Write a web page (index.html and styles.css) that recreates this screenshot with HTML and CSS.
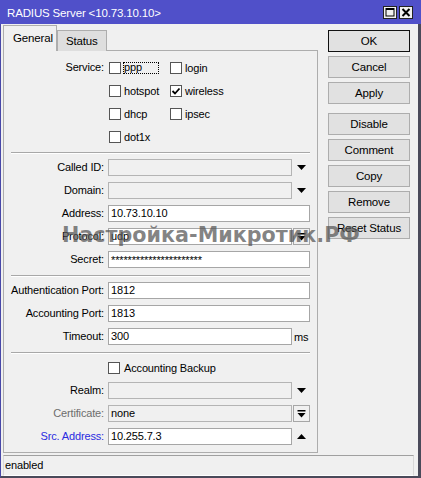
FILE: index.html
```html
<!DOCTYPE html>
<html>
<head>
<meta charset="utf-8">
<link rel="stylesheet" href="styles.css">
</head>
<body>
<div class="window">
  <div class="titlebar">
    <span class="title">RADIUS Server &lt;10.73.10.10&gt;</span>
    <span class="tbtn"><svg width="12" height="11" viewBox="0 0 12 11"><rect x="2" y="1.5" width="8" height="7.5" fill="none" stroke="#000" stroke-width="1"/><rect x="2" y="1" width="8" height="2" fill="#000"/></svg></span>
    <span class="tbtn"><svg width="12" height="11" viewBox="0 0 12 11"><path d="M2.5 2 L9.5 9 M9.5 2 L2.5 9" stroke="#000" stroke-width="2"/></svg></span>
  </div>
  <div class="frame">
    <div class="content">
      <div class="main">
        <div class="tabs">
          <div class="tab active">General</div>
          <div class="tab">Status</div>
        </div>
        <div class="panel">
          <div class="svc">
            <div class="lbl">Service:</div>
            <div class="cbgrid">
              <div class="cb"><span class="box"></span><span class="focus">ppp</span></div>
              <div class="cb"><span class="box"></span><span>login</span></div>
              <div class="cb"><span class="box"></span><span>hotspot</span></div>
              <div class="cb"><span class="box"><svg width="10" height="10" viewBox="0 0 10 10"><path d="M1.5 5 L4 7.5 L8.5 2.5" fill="none" stroke="#000" stroke-width="1.8"/></svg></span><span>wireless</span></div>
              <div class="cb"><span class="box"></span><span>dhcp</span></div>
              <div class="cb"><span class="box"></span><span>ipsec</span></div>
              <div class="cb"><span class="box"></span><span>dot1x</span></div>
            </div>
          </div>
          <div class="sep"></div>
          <div class="row"><div class="lbl">Called ID:</div><div class="field w184 dis"></div><div class="arrow"><svg width="9" height="5" viewBox="0 0 9 5"><path d="M0 0 H9 L4.5 5 Z" fill="#000"/></svg></div></div>
          <div class="row"><div class="lbl">Domain:</div><div class="field w184 dis"></div><div class="arrow"><svg width="9" height="5" viewBox="0 0 9 5"><path d="M0 0 H9 L4.5 5 Z" fill="#000"/></svg></div></div>
          <div class="row"><div class="lbl">Address:</div><div class="field w202">10.73.10.10</div></div>
          <div class="row"><div class="lbl">Protocol:</div><div class="field w184">udp</div><div class="cbtn"><svg width="9" height="8" viewBox="0 0 9 8"><rect x="0.5" y="0" width="8" height="1.5" fill="#000"/><path d="M0.5 3 H8.5 L4.5 7.5 Z" fill="#000"/></svg></div></div>
          <div class="row"><div class="lbl">Secret:</div><div class="field w202 secret">**********************</div></div>
          <div class="sep"></div>
          <div class="row"><div class="lbl">Authentication Port:</div><div class="field w202">1812</div></div>
          <div class="row"><div class="lbl">Accounting Port:</div><div class="field w202">1813</div></div>
          <div class="row"><div class="lbl">Timeout:</div><div class="field w184">300</div><div class="unit">ms</div></div>
          <div class="sep"></div>
          <div class="row"><div class="lbl"></div><div class="cb solo"><span class="box"></span><span>Accounting Backup</span></div></div>
          <div class="row"><div class="lbl">Realm:</div><div class="field w184 dis"></div><div class="arrow"><svg width="9" height="5" viewBox="0 0 9 5"><path d="M0 0 H9 L4.5 5 Z" fill="#000"/></svg></div></div>
          <div class="row"><div class="lbl gray">Certificate:</div><div class="field w184 dis">none</div><div class="cbtn"><svg width="9" height="8" viewBox="0 0 9 8"><rect x="0.5" y="0" width="8" height="1.5" fill="#000"/><path d="M0.5 3 H8.5 L4.5 7.5 Z" fill="#000"/></svg></div></div>
          <div class="row"><div class="lbl blue">Src. Address:</div><div class="field w184">10.255.7.3</div><div class="arrow"><svg width="9" height="5" viewBox="0 0 9 5"><path d="M0 5 H9 L4.5 0 Z" fill="#000"/></svg></div></div>
        </div>
      </div>
      <div class="side">
        <div class="btn default">OK</div>
        <div class="btn">Cancel</div>
        <div class="btn">Apply</div>
        <div class="btn gapped">Disable</div>
        <div class="btn">Comment</div>
        <div class="btn">Copy</div>
        <div class="btn">Remove</div>
        <div class="btn">Reset Status</div>
      </div>
    </div>
    <div class="statusbar">enabled</div>
  </div>
  <div class="watermark">Настройка-Микротик.РФ</div>
</div>
</body>
</html>
```

FILE: styles.css
```css
html, body {
  margin: 0;
  padding: 0;
  background: #f0f0f0;
}
.window {
  position: relative;
  width: 421px;
  height: 478px;
  display: flex;
  flex-direction: column;
  font-family: "Liberation Sans", Arial, sans-serif;
  font-size: 11px;
  letter-spacing: -0.15px;
  color: #000;
  background: #f0f0f0;
  overflow: hidden;
}
.titlebar {
  height: 24px;
  flex-shrink: 0;
  background: #5050c9;
  display: flex;
  align-items: center;
  padding: 0 8px 0 7px;
  box-sizing: border-box;
}
.title {
  color: #fff;
  font-size: 11.5px;
  flex: 1;
  padding-top: 1px;
}
.tbtn {
  width: 14px;
  height: 13px;
  box-sizing: border-box;
  border: 1px solid #222;
  background: #f0f0f0;
  margin-left: 2px;
  display: flex;
  align-items: center;
  justify-content: center;
}
.frame {
  flex: 1;
  display: flex;
  flex-direction: column;
  border-left: 1px solid #4848a8;
  border-right: 3px solid #4a4a5a;
  border-bottom: 2px solid #4a4a5a;
}
.content {
  display: flex;
  padding-top: 1px;
}
.main {
  margin-left: 2px;
  width: 315px;
  display: flex;
  flex-direction: column;
}
.tabs {
  display: flex;
  align-items: flex-end;
  height: 26px;
  position: relative;
  z-index: 1;
}
.tab {
  box-sizing: border-box;
  border: 1px solid #adadad;
  border-bottom: none;
  height: 21px;
  padding: 0 8px;
  line-height: 20px;
  background: #dedede;
  font-size: 11.5px;
}
.tab.active {
  height: 26px;
  width: 54px;
  line-height: 24px;
  background: #f0f0f0;
  padding: 0 0 0 9px;
}
.panel {
  margin-top: -1px;
  height: 403px;
  box-sizing: border-box;
  border: 1px solid #adadad;
  padding-top: 5px;
  background: #f0f0f0;
}
.svc {
  display: flex;
  align-items: flex-start;
}
.lbl {
  width: 100px;
  margin-right: 4px;
  height: 23px;
  line-height: 23px;
  text-align: right;
  white-space: nowrap;
  flex-shrink: 0;
}
.lbl.gray { color: #6d6d6d; }
.lbl.blue { color: #2b2be0; }
.cbgrid {
  display: grid;
  grid-template-columns: 61px auto;
  grid-auto-rows: 23px;
}
.cb {
  display: flex;
  align-items: center;
}
.box {
  width: 12px;
  height: 12px;
  box-sizing: border-box;
  border: 1px solid #555;
  background: #fff;
  margin-left: 1px;
  margin-right: 3px;
  display: flex;
  align-items: center;
  justify-content: center;
}
.cb.solo .box {
  margin-left: 0;
  margin-right: 4px;
}
.focus {
  display: inline-block;
  width: 36px;
  height: 12px;
  box-sizing: border-box;
  border: 1px dotted #000;
  line-height: 9px;
  padding-left: 0;
  margin-left: -1px;
}
.sep {
  height: 0;
  border-top: 1px solid #a8a8a8;
  border-bottom: 1px solid #fff;
  margin: 4px 7px 2px 7px;
}
.row {
  display: flex;
  align-items: center;
  height: 23px;
}
.field {
  height: 17px;
  box-sizing: border-box;
  border: 1px solid #a6a6a6;
  background: #fff;
  padding-left: 2px;
  line-height: 15px;
  white-space: nowrap;
  overflow: hidden;
}
.field.dis {
  background: #f0f0f0;
  border-color: #b4b4b4;
}
.field.secret {
  line-height: 17px;
}
.w202 { width: 202px; }
.w184 { width: 184px; }
.arrow {
  width: 18px;
  display: flex;
  justify-content: center;
  align-items: center;
}
.cbtn {
  width: 17px;
  height: 17px;
  box-sizing: border-box;
  margin-left: 1px;
  border: 1px solid #a6a6a6;
  background: #f0f0f0;
  display: flex;
  justify-content: center;
  align-items: center;
}
.unit {
  margin-left: 2px;
}
.side {
  margin-left: 10px;
  width: 82px;
  padding-top: 5px;
  display: flex;
  flex-direction: column;
  gap: 4px;
}
.btn {
  height: 22px;
  box-sizing: border-box;
  border: 1px solid #adadad;
  background: #e1e1e1;
  text-align: center;
  line-height: 20px;
  font-size: 11.5px;
}
.btn.default {
  border-color: #111;
}
.btn.gapped {
  margin-top: 5px;
}
.statusbar {
  margin: 2px 0 0 2px;
  width: 411px;
  height: 21px;
  box-sizing: border-box;
  border-top: 1px solid #a0a0a0;
  border-left: 1px solid #d8d8d8;
  border-right: 1px solid #d8d8d8;
  border-bottom: 1px solid #fff;
  padding-left: 1px;
  line-height: 19px;
}
.watermark {
  position: absolute;
  left: 62px;
  top: 225px;
  font-family: "DejaVu Sans", sans-serif;
  font-weight: bold;
  font-size: 20.7px;
  line-height: 20px;
  letter-spacing: 0;
  color: rgba(85, 85, 85, 0.72);
  white-space: nowrap;
}
```
